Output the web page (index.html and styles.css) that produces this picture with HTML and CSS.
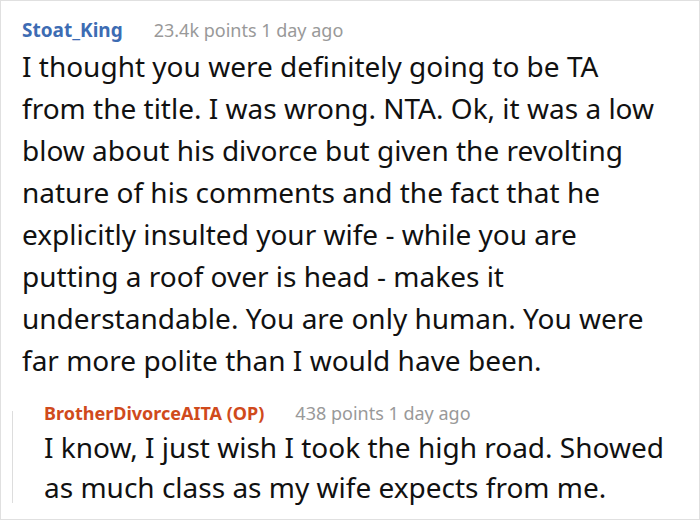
FILE: index.html
```html
<!DOCTYPE html>
<html>
<head>
<meta charset="utf-8">
<link rel="stylesheet" href="styles.css">
</head>
<body>
<div class="frame">
  <div class="comment">
    <div class="meta">
      <span class="user">Stoat_King</span>
      <span class="info">23.4k points 1 day ago</span>
    </div>
    <p class="text">I thought you were definitely going to be TA<br>from the title. I was wrong. NTA. Ok, it was a low blow about his divorce but given the revolting nature of his comments and the fact that he explicitly insulted your wife - while you are putting a roof over is head - makes it understandable. You are only human. You were far more polite than I would have been.</p>
  </div>
  <div class="reply">
    <div class="thread-line"></div>
    <div class="reply-body">
      <div class="meta">
        <span class="user op">BrotherDivorceAITA (OP)</span>
        <span class="info">438 points 1 day ago</span>
      </div>
      <p class="text small">I know, I just wish I took the high road. Showed as much class as my wife expects from me.</p>
    </div>
  </div>
</div>
</body>
</html>
```
FILE: styles.css
```css
html, body {
  margin: 0;
  padding: 0;
  background: #fff;
}
.frame {
  width: 700px;
  height: 520px;
  box-sizing: border-box;
  border: 1px solid #e0e0e0;
  overflow: hidden;
  font-family: "Noto Sans", "Open Sans", sans-serif;
}
.comment {
  padding: 17px 0 0 21px;
}
.meta {
  display: flex;
  align-items: baseline;
  gap: 31px;
  font-size: 18px;
  line-height: 24px;
}
.user {
  font-weight: 700;
  font-size: 19px;
  color: #3d6cb3;
}
.user.op {
  font-size: 18px;
  color: #d04a1c;
}
.info {
  color: #999;
}
.text {
  margin: 3px 0 0 0;
  font-size: 28px;
  line-height: 42px;
  color: #111;
  width: 645px;
}
.reply {
  display: flex;
  margin-top: 20px;
  padding-left: 11px;
}
.thread-line {
  width: 1px;
  background: #ddd;
  margin: 10px 0 4px 0;
}
.reply-body {
  padding-left: 31px;
}
.text.small {
  margin-top: 2px;
  font-size: 28px;
  line-height: 40px;
  width: 640px;
}
```
